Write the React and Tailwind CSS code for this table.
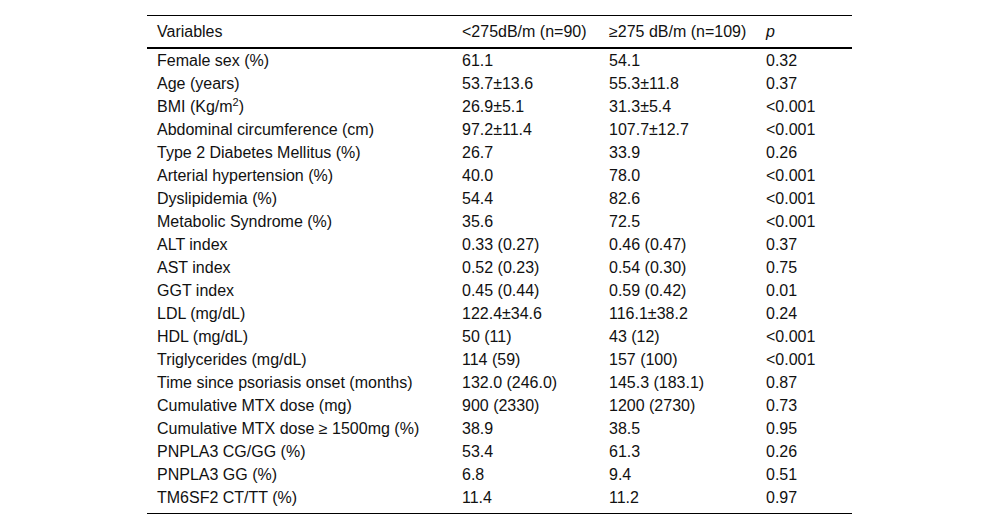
const ROWS = [
  ['Female sex (%)', '61.1', '54.1', '0.32'],
  ['Age (years)', '53.7±13.6', '55.3±11.8', '0.37'],
  ['BMI', '26.9±5.1', '31.3±5.4', '<0.001'],
  ['Abdominal circumference (cm)', '97.2±11.4', '107.7±12.7', '<0.001'],
  ['Type 2 Diabetes Mellitus (%)', '26.7', '33.9', '0.26'],
  ['Arterial hypertension (%)', '40.0', '78.0', '<0.001'],
  ['Dyslipidemia (%)', '54.4', '82.6', '<0.001'],
  ['Metabolic Syndrome (%)', '35.6', '72.5', '<0.001'],
  ['ALT index', '0.33 (0.27)', '0.46 (0.47)', '0.37'],
  ['AST index', '0.52 (0.23)', '0.54 (0.30)', '0.75'],
  ['GGT index', '0.45 (0.44)', '0.59 (0.42)', '0.01'],
  ['LDL (mg/dL)', '122.4±34.6', '116.1±38.2', '0.24'],
  ['HDL (mg/dL)', '50 (11)', '43 (12)', '<0.001'],
  ['Triglycerides (mg/dL)', '114 (59)', '157 (100)', '<0.001'],
  ['Time since psoriasis onset (months)', '132.0 (246.0)', '145.3 (183.1)', '0.87'],
  ['Cumulative MTX dose (mg)', '900 (2330)', '1200 (2730)', '0.73'],
  ['Cumulative MTX dose ≥ 1500mg (%)', '38.9', '38.5', '0.95'],
  ['PNPLA3 CG/GG (%)', '53.4', '61.3', '0.26'],
  ['PNPLA3 GG (%)', '6.8', '9.4', '0.51'],
  ['TM6SF2 CT/TT (%)', '11.4', '11.2', '0.97'],
]

const cols = 'grid grid-cols-[305px_147px_157px_96px] whitespace-nowrap'

export default function App() {
  return (
    <div className="h-[530px] w-[1000px] bg-white pt-[15px] text-[16px] leading-none text-[#111]" style={{ fontFamily: '"Liberation Sans", Arial, sans-serif' }}>
      <div className="ml-[147px] w-[705px] border-y border-black pb-[4px]">
        <div className={`${cols} h-[33px] items-center border-b-2 border-black`}>
          <div className="px-[10px]">Variables</div>
          <div className="px-[10px]">&lt;275dB/m (n=90)</div>
          <div className="px-[10px]">≥275 dB/m (n=109)</div>
          <div className="px-[10px] italic">p</div>
        </div>
        {ROWS.map((r) => (
          <div key={r[0]} className={`${cols} h-[23px] items-center`}>
            <div className="px-[10px]">
              {r[0] === 'BMI' ? (
                <>
                  BMI (Kg/m<span className="relative -top-[6px] text-[11px]">2</span>)
                </>
              ) : (
                r[0]
              )}
            </div>
            <div className="px-[10px]">{r[1]}</div>
            <div className="px-[10px]">{r[2]}</div>
            <div className="px-[10px]">{r[3]}</div>
          </div>
        ))}
      </div>
    </div>
  )
}
